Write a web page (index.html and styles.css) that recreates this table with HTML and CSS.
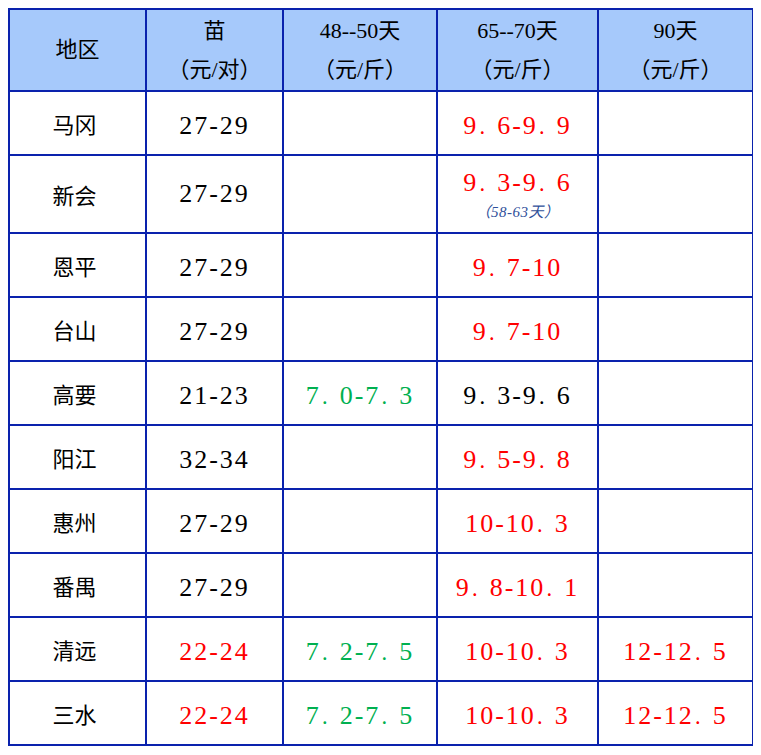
FILE: index.html
```html
<!DOCTYPE html>
<html lang="zh">
<head>
<meta charset="utf-8">
<link rel="stylesheet" href="styles.css">
</head>
<body>
<table class="price">
  <colgroup>
    <col class="c1"><col class="c2"><col class="c3"><col class="c4"><col class="c5">
  </colgroup>
  <thead>
    <tr class="head">
      <th>地区</th>
      <th><span class="l1">苗</span><span class="l2">（元/对）</span></th>
      <th><span class="l1">48--50天</span><span class="l2">（元/斤）</span></th>
      <th><span class="l1">65--70天</span><span class="l2">（元/斤）</span></th>
      <th><span class="l1">90天</span><span class="l2">（元/斤）</span></th>
    </tr>
  </thead>
  <tbody>
    <tr><td class="area">马冈</td><td class="num">27-29</td><td></td><td class="num red">9<span class="d">．</span>6-9<span class="d">．</span>9</td><td></td></tr>
    <tr class="tall"><td class="area">新会</td><td class="num">27-29</td><td></td><td class="num red"><span class="main">9<span class="d">．</span>3-9<span class="d">．</span>6</span><span class="note">（58-63天）</span></td><td></td></tr>
    <tr><td class="area">恩平</td><td class="num">27-29</td><td></td><td class="num red">9<span class="d">．</span>7-10</td><td></td></tr>
    <tr><td class="area">台山</td><td class="num">27-29</td><td></td><td class="num red">9<span class="d">．</span>7-10</td><td></td></tr>
    <tr><td class="area">高要</td><td class="num">21-23</td><td class="num green">7<span class="d">．</span>0-7<span class="d">．</span>3</td><td class="num">9<span class="d">．</span>3-9<span class="d">．</span>6</td><td></td></tr>
    <tr><td class="area">阳江</td><td class="num">32-34</td><td></td><td class="num red">9<span class="d">．</span>5-9<span class="d">．</span>8</td><td></td></tr>
    <tr><td class="area">惠州</td><td class="num">27-29</td><td></td><td class="num red">10-10<span class="d">．</span>3</td><td></td></tr>
    <tr><td class="area">番禺</td><td class="num">27-29</td><td></td><td class="num red">9<span class="d">．</span>8-10<span class="d">．</span>1</td><td></td></tr>
    <tr><td class="area">清远</td><td class="num red">22-24</td><td class="num green">7<span class="d">．</span>2-7<span class="d">．</span>5</td><td class="num red">10-10<span class="d">．</span>3</td><td class="num red">12-12<span class="d">．</span>5</td></tr>
    <tr><td class="area">三水</td><td class="num red">22-24</td><td class="num green">7<span class="d">．</span>2-7<span class="d">．</span>5</td><td class="num red">10-10<span class="d">．</span>3</td><td class="num red">12-12<span class="d">．</span>5</td></tr>
  </tbody>
</table>
</body>
</html>
```
FILE: styles.css
```css
body {
  margin: 8px;
  background: #ffffff;
  font-family: "Liberation Serif", "Noto Sans CJK SC", serif;
  color: #000000;
}
.price {
  border-collapse: collapse;
  table-layout: fixed;
  width: 744px;
}
.c1 { width: 137px; }
.c2 { width: 137px; }
.c3 { width: 154px; }
.c4 { width: 161px; }
.c5 { width: 155px; }
.price th,
.price td {
  border: 2px solid #0a22ad;
  padding: 0;
  text-align: center;
  vertical-align: middle;
  font-weight: normal;
  height: 62px;
  line-height: 30px;
}
.price .head th {
  background: #a6c9fb;
  height: 79px;
  padding-bottom: 1px;
  font-size: 22px;
  line-height: 39px;
}
.head th .l1,
.head th .l2 {
  display: block;
}
.area {
  font-family: "Noto Sans CJK SC", sans-serif;
  font-size: 22px;
  padding-right: 6px !important;
}
.price td.num {
  font-size: 26px;
  letter-spacing: 2px;
  padding-top: 5px;
  height: 57px;
}
.num .d {
  font-size: 17px;
  line-height: 0;
}
.red { color: #ff0000; }
.green { color: #00b050; }
.price .tall td { height: 76px; }
.price .tall td.num { padding-top: 0; height: 76px; }
.tall .main {
  display: block;
  line-height: 28px;
  padding-top: 4px;
}
.tall .note {
  display: block;
  font-size: 15px;
  font-style: italic;
  letter-spacing: 0.5px;
  color: #2f4f9a;
  line-height: 22px;
  margin-top: 4px;
}
```
